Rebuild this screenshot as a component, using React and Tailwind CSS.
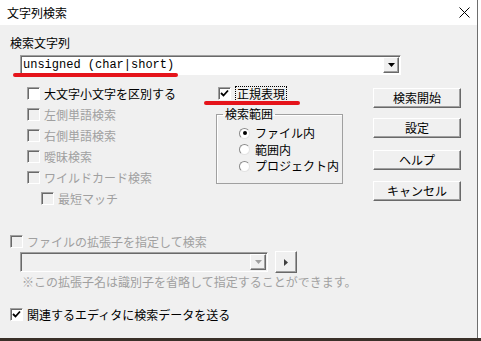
const GRAY = "text-[#a0a0a0]";

function CheckMark() {
  return (
    <svg width="9" height="9" viewBox="0 0 9 9" className="block">
      <polyline points="1,4 3.5,6.5 8,1.5" fill="none" stroke="#000" strokeWidth="1.8" />
    </svg>
  );
}

function Box({ checked, disabled }) {
  return (
    <span
      className={`flex h-[13px] w-[13px] shrink-0 items-center justify-center border border-b-white border-l-[#a0a0a0] border-r-white border-t-[#a0a0a0] shadow-[inset_1px_1px_0_#696969] ${
        disabled ? "bg-[#f0f0f0]" : "bg-white"
      }`}
    >
      {checked && <CheckMark />}
    </span>
  );
}

function Check({ label, checked, disabled, focus, className = "" }) {
  return (
    <div className={`flex h-[21px] items-center gap-[4px] ${className}`}>
      <Box checked={checked} disabled={disabled} />
      <span
        className={`whitespace-nowrap ${disabled ? GRAY : "text-black"} ${
          focus ? "border border-dotted border-black px-px" : ""
        }`}
      >
        {label}
      </span>
    </div>
  );
}

function Radio({ label, selected }) {
  return (
    <div className="flex h-[16.5px] items-center gap-[5px]">
      <span className="flex h-[11px] w-[11px] items-center justify-center rounded-full border border-b-[#e3e3e3] border-l-[#8a8a8a] border-r-[#e3e3e3] border-t-[#8a8a8a] bg-white">
        {selected && <span className="h-[4px] w-[4px] rounded-full bg-black" />}
      </span>
      <span className="whitespace-nowrap">{label}</span>
    </div>
  );
}

function Button({ children, className = "" }) {
  return (
    <div
      className={`flex h-[20px] w-[88px] items-center justify-center border border-b-[#696969] border-l-white border-r-[#696969] border-t-white bg-[#f0f0f0] shadow-[inset_-1px_-1px_0_#a0a0a0] ${className}`}
    >
      {children}
    </div>
  );
}

function DropButton({ disabled }) {
  return (
    <span className="flex h-[16px] w-[16px] items-center justify-center border border-b-[#696969] border-l-white border-r-[#696969] border-t-white bg-[#f0f0f0] shadow-[inset_-1px_-1px_0_#a0a0a0]">
      <svg width="7" height="4" viewBox="0 0 7 4" className="block">
        <polygon points="0,0 7,0 3.5,4" fill={disabled ? "#a0a0a0" : "#000"} />
      </svg>
    </span>
  );
}

function Combo({ children, disabled, className = "" }) {
  return (
    <div
      className={`flex h-[20px] items-center justify-between border border-b-white border-l-[#a0a0a0] border-r-white border-t-[#a0a0a0] pl-[2px] pr-px shadow-[inset_1px_1px_0_#696969] ${
        disabled ? "bg-[#f0f0f0]" : "bg-white"
      } ${className}`}
    >
      <span className="font-['Liberation_Mono',monospace] text-[12px] leading-[14px] text-black">
        {children}
      </span>
      <DropButton disabled={disabled} />
    </div>
  );
}

export default function App() {
  return (
    <div className="flex h-[341px] w-[481px] flex-col overflow-hidden bg-white font-['Noto_Sans_CJK_JP',sans-serif] text-[12px] leading-[14px] text-black">
      <div className="flex h-[338px] shrink-0">
        <div className="flex w-[478px] flex-col border-r border-[#6e6e6e]">
          {/* title bar */}
          <div className="flex h-[25px] shrink-0 items-center justify-between bg-white pl-[7px] pr-[7px]">
            <span>文字列検索</span>
            <svg width="11" height="11" viewBox="0 0 11 11" className="block">
              <path d="M0.5 0.5 L10.5 10.5 M10.5 0.5 L0.5 10.5" stroke="#000" strokeWidth="1" />
            </svg>
          </div>

          {/* body */}
          <div className="flex-1 bg-[#f0f0f0] pl-[10px] pt-[11px]">
            <div className="h-[14px]">検索文字列</div>

            <div className="relative ml-[10px] mt-[5px] w-[381px]">
              <Combo>unsigned (char|short)</Combo>
              <span className="absolute left-[-7px] top-[18px] h-[4px] w-[165px] rounded-full bg-[#e5141b]" />
            </div>

            <div className="mt-[8px] flex">
              {/* left options */}
              <div className="ml-[17px] flex w-[189px] flex-col">
                <Check label="大文字小文字を区別する" />
                <Check label="左側単語検索" disabled />
                <Check label="右側単語検索" disabled />
                <Check label="曖昧検索" disabled />
                <Check label="ワイルドカード検索" disabled />
                <Check label="最短マッチ" disabled className="pl-[14px]" />
              </div>

              {/* regex + scope */}
              <div className="flex w-[127px] flex-col">
                <div className="relative">
                  <Check label="正規表現" checked focus className="pl-[2px]" />
                  <span className="absolute left-[-12px] top-[18px] h-[4px] w-[96px] rounded-full bg-[#e5141b]" />
                </div>
                <fieldset className="mt-[3px] h-[77px] border border-[#a0a0a0] shadow-[inset_1px_1px_0_#fff]">
                  <legend className="ml-[6px] px-[2px]">検索範囲</legend>
                  <div className="flex flex-col pl-[22px] pt-[4px]">
                    <Radio label="ファイル内" selected />
                    <Radio label="範囲内" />
                    <Radio label="プロジェクト内" />
                  </div>
                </fieldset>
              </div>

              {/* buttons */}
              <div className="ml-[30px] flex flex-col">
                <Button className="mt-[5px]">検索開始</Button>
                <Button className="mt-[10px]">設定</Button>
                <Button className="mt-[12px]">ヘルプ</Button>
                <Button className="mt-[11px]">キャンセル</Button>
              </div>
            </div>

            {/* extension filter */}
            <div className="mt-[22px]">
              <Check label="ファイルの拡張子を指定して検索" disabled className="h-[20px]" />
            </div>
            <div className="ml-[10px] flex items-start">
              <Combo disabled className="w-[248px]" />
              <div className="-mt-px ml-[7px] flex h-[22px] w-[22px] items-center justify-center border border-b-[#696969] border-l-white border-r-[#696969] border-t-white bg-[#f0f0f0] shadow-[inset_-1px_-1px_0_#a0a0a0]">
                <svg width="4" height="7" viewBox="0 0 4 7" className="block">
                  <polygon points="0,0 4,3.5 0,7" fill="#404040" />
                </svg>
              </div>
            </div>
            <div className={`ml-[12px] mt-[2px] h-[14px] ${GRAY}`}>
              ※この拡張子名は識別子を省略して指定することができます。
            </div>

            <div className="mt-[15px]">
              <Check label="関連するエディタに検索データを送る" checked />
            </div>
          </div>
        </div>
        <div className="flex-1 bg-white" />
      </div>
      <div className="flex-1 bg-[#3a3029]" />
    </div>
  );
}
